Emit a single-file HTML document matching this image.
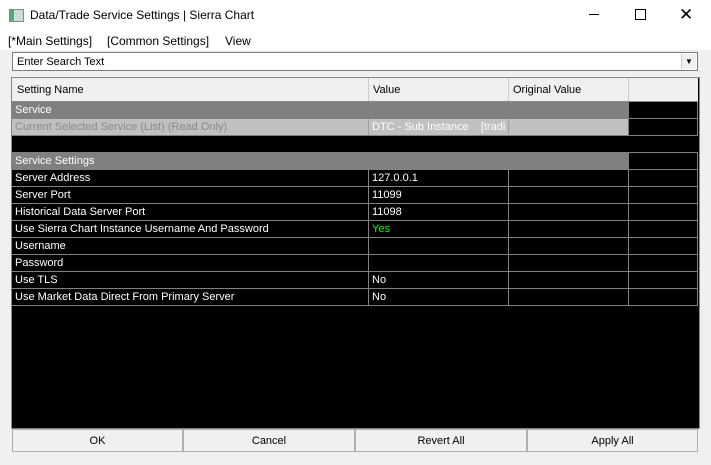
<html><head><style>
body{margin:0;width:711px;height:465px;background:#f0f0f0;font-family:"Liberation Sans",sans-serif;font-size:11px;position:relative;overflow:hidden}
.a{position:absolute}
#tb{left:0;top:0;width:711px;height:31px;background:#fff}
#mb{left:0;top:31px;width:711px;height:19px;background:#fff;font-size:12px}
.t{position:absolute;height:16px;line-height:16px;padding-left:3px;box-sizing:border-box;white-space:nowrap;overflow:hidden}
.btn{position:absolute;top:429px;height:23px;background:#f0f0f0;border:1px solid #adadad;box-sizing:border-box;text-align:center;line-height:22px;font-size:11px;color:#000}
</style></head><body>
<div id="tb" class="a">
<div class="a" style="left:9px;top:9px;width:13px;height:11px;border:1px solid #888;background:linear-gradient(90deg,#5a7 0 4px,#cdd 4px)"></div>
<div class="a" style="left:30px;top:8px;font-size:12px">Data/Trade Service Settings | Sierra Chart</div>
<div class="a" style="left:589px;top:14px;width:10px;height:1px;background:#000"></div>
<div class="a" style="left:635px;top:9px;width:9px;height:9px;border:1px solid #000"></div>
<div class="a" style="left:679px;top:6px;font-size:17px;line-height:17px">✕</div>
</div>
<div id="mb" class="a"><span class="a" style="left:8px;top:3px">[*Main Settings]</span><span class="a" style="left:107px;top:3px">[Common Settings]</span><span class="a" style="left:225px;top:3px">View</span></div>
<div class="a" style="left:12px;top:52px;width:686px;height:19px;background:#fff;border:1px solid #7a7a7a;box-sizing:border-box"><span class="a" style="left:4px;top:3px">Enter Search Text</span>
<div class="a" style="right:1px;top:1px;width:14px;height:15px;border-left:1px solid #ccc;background:#f0f0f0;font-size:8px;text-align:center;line-height:15px">▼</div></div>
<div class="a" style="left:11px;top:77px;width:689px;height:352px;background:#000;border:1px solid #888;box-sizing:border-box"></div>
<div class="a" style="left:12px;top:78px;width:686px;height:23px;background:#f0f0f0"></div>
<div class="a" style="left:17px;top:84px">Setting Name</div>
<div class="a" style="left:368px;top:78px;width:1px;height:23px;background:#ccc"></div>
<div class="a" style="left:373px;top:84px">Value</div>
<div class="a" style="left:508px;top:78px;width:1px;height:23px;background:#ccc"></div>
<div class="a" style="left:513px;top:84px">Original Value</div>
<div class="a" style="left:628px;top:78px;width:1px;height:23px;background:#ccc"></div>
<div class="a" style="left:12px;top:101px;width:686px;height:1px;background:#888"></div>
<div id="g"></div>
<script>
var h="";
function L(x,y,w,hh,c){h+='<div class="a" style="left:'+x+'px;top:'+y+'px;width:'+w+'px;height:'+hh+'px;background:'+c+'"></div>';}
function T(x,y,w,s,c,bg){h+='<div class="t" style="left:'+x+'px;top:'+y+'px;width:'+w+'px;color:'+c+';background:'+(bg||'transparent')+'">'+s+'</div>';}
for(var i=0;i<12;i++){L(12,118+i*17,686,1,'#808080');}
[368,508,628].forEach(function(x){L(x,102,1,204,'#808080');});
L(697,102,1,204,'#808080');
L(12,102,616,16,'#808080');T(12,102,356,'Service','#fff');
L(12,119,616,16,'#c0c0c0');L(368,119,1,16,'#a0a0a0');L(508,119,1,16,'#a0a0a0');
T(12,119,356,'Current Selected Service (List) (Read Only)','#8a8a8a');
T(369,119,139,'DTC - Sub Instance &nbsp;&nbsp; [tradi','#fff');
L(12,136,686,16,'#000');
L(12,153,616,16,'#808080');T(12,153,356,'Service Settings','#fff');
var d=[["Server Address","127.0.0.1"],["Server Port","11099"],["Historical Data Server Port","11098"],["Use Sierra Chart Instance Username And Password","Yes"],["Username",""],["Password",""],["Use TLS","No"],["Use Market Data Direct From Primary Server","No"]];
d.forEach(function(r,i){var y=170+i*17;T(12,y,356,r[0],'#fff');T(369,y,139,r[1],r[1]=="Yes"?"#0f0":"#fff");});
document.getElementById("g").innerHTML=h;
</script>
<div class="btn" style="left:12px;width:171px">OK</div>
<div class="btn" style="left:183px;width:172px">Cancel</div>
<div class="btn" style="left:355px;width:172px">Revert All</div>
<div class="btn" style="left:527px;width:171px">Apply All</div>
</body></html>
